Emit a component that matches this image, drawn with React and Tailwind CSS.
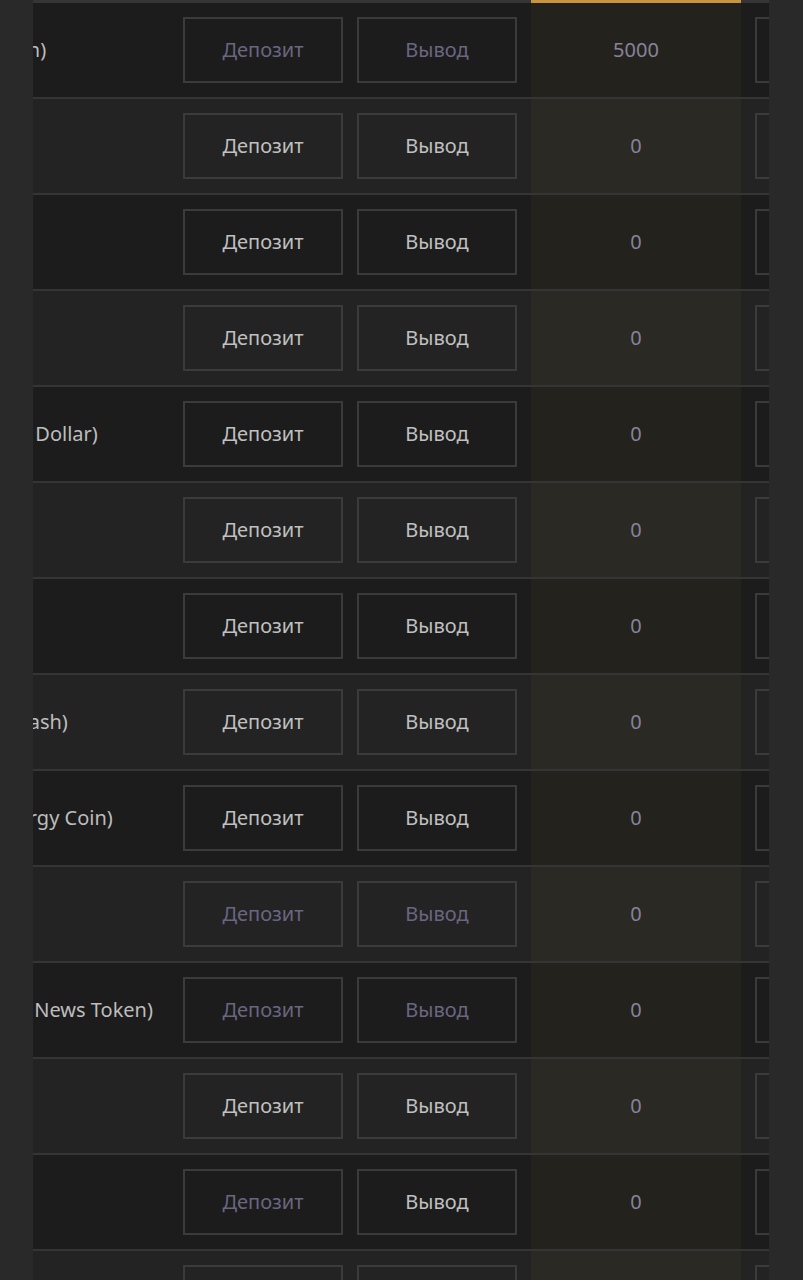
import React from "react";

const rows = [
    { name: "BTC (Bitcoin)", amount: "5000", dep: false, wd: false },
    { name: "ETH", amount: "0", dep: true, wd: true },
    { name: "LTC", amount: "0", dep: true, wd: true },
    { name: "XRP", amount: "0", dep: true, wd: true },
    { name: "USDT (USD Dollar)", amount: "0", dep: true, wd: true },
    { name: "TRX", amount: "0", dep: true, wd: true },
    { name: "BNB", amount: "0", dep: true, wd: true },
    { name: "BCHS (BitCash)", amount: "0", dep: true, wd: true },
    { name: "NRGC (Energy Coin)", amount: "0", dep: true, wd: true },
    { name: "SOL", amount: "0", dep: false, wd: false },
    { name: "BNT (Block News Token)", amount: "0", dep: false, wd: false },
    { name: "DOGE", amount: "0", dep: true, wd: true },
    { name: "ADA", amount: "0", dep: false, wd: true },
    { name: "XLM", amount: "0", dep: true, wd: true },
];

const Btn = ({ label, active }) => (
    <div
        className={`${active ? "text-[#c0c0c0]" : "text-[#6a6681]"} w-[160px] h-[66px] shrink-0 border-2 border-[#3b3b3b] flex items-center justify-center text-[20px]`}
    >
        {label}
    </div>
);

const App = () => {
    return (
        <div className="h-[1280px] bg-[#292929] overflow-hidden" style={{ fontFamily: '"Noto Sans", "Open Sans", sans-serif' }}>
            <div className="ml-[33px] w-[736px] h-full overflow-hidden">
                {/* table, scrolled sideways */}
                <div className="-ml-[105px] w-max">
                    {/* header bottom line */}
                    <div className="flex h-[3px] bg-[#353535]">
                        <div className="w-[241px]" />
                        <div className="w-[348px]" />
                        <div className="w-[14px]" />
                        <div className="w-[210px] bg-[#c8963e]" />
                        <div className="w-[174px]" />
                    </div>

                    {/* rows */}
                    {rows.map((row, index) => (
                        <div
                            key={index}
                            className={`${index % 2 === 0 ? "bg-[#1c1c1c]" : "bg-[#232323]"} ${index > 0 ? "border-t-2 border-[#353535] h-[96px]" : "h-[94px]"} flex items-stretch`}
                        >
                            <div className="w-[241px] flex items-center text-[20px] text-[#bdbdbd] whitespace-nowrap">
                                {row.name}
                            </div>
                            <div className="w-[174px] pl-[14px] flex items-center">
                                <Btn label="Депозит" active={row.dep} />
                            </div>
                            <div className="w-[174px] pl-[14px] flex items-center">
                                <Btn label="Вывод" active={row.wd} />
                            </div>
                            <div className="w-[14px]" />
                            <div className="w-[210px] bg-[#c8963e]/5 flex items-center justify-center text-[20px] text-[#86829a]">
                                {row.amount}
                            </div>
                            <div className="w-[174px] pl-[14px] flex items-center">
                                <Btn label="Торговать" active={true} />
                            </div>
                        </div>
                    ))}
                </div>
            </div>
        </div>
    );
};

export default App;
